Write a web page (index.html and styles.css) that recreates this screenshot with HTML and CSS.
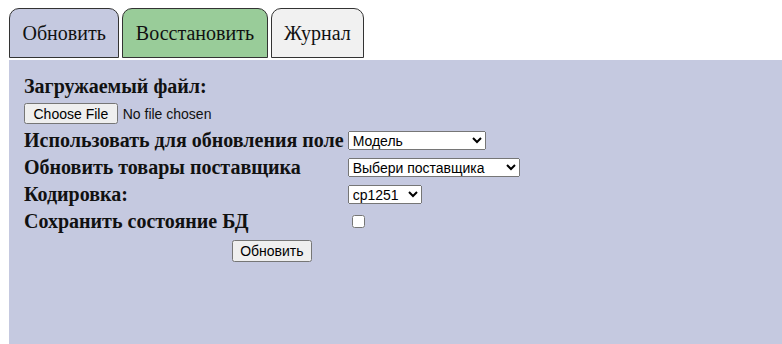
FILE: index.html
```html
<!DOCTYPE html>
<html lang="ru">
<head>
    <meta charset="UTF-8">
    <title>Обновление</title>
    <link rel="stylesheet" href="styles.css">
</head>
<body>
    <div class="tabs">
        <div class="tab tab-update">Обновить</div>
        <div class="tab tab-restore">Восстановить</div>
        <div class="tab tab-log">Журнал</div>
    </div>

    <div class="panel">
        <form class="upload-form">
            <div class="cell full label">Загружаемый файл:</div>
            <div class="cell full"><input type="file" name="file"></div>

            <div class="cell label">Использовать для обновления поле</div>
            <div class="cell">
                <select class="field-select" name="field">
                    <option>Модель</option>
                </select>
            </div>

            <div class="cell label">Обновить товары поставщика</div>
            <div class="cell">
                <select class="supplier-select" name="supplier">
                    <option>Выбери поставщика</option>
                </select>
            </div>

            <div class="cell label">Кодировка:</div>
            <div class="cell">
                <select class="encoding-select" name="encoding">
                    <option>cp1251</option>
                </select>
            </div>

            <div class="cell label">Сохранить состояние БД</div>
            <div class="cell"><input type="checkbox" name="backup"></div>

            <div class="cell full submit"><button type="button">Обновить</button></div>
        </form>
    </div>
</body>
</html>
```

FILE: styles.css
```css
body {
    margin: 8px 0 0 9px;
    font-family: 'Liberation Serif', 'Times New Roman', serif;
    font-size: 20px;
    color: #111;
}

.tabs {
    display: flex;
    gap: 3px;
    margin-bottom: 2px;
}

.tab {
    border: 1px solid #333;
    border-radius: 10px 10px 0 0;
    padding: 13px 12.5px 12px;
    line-height: 23px;
    cursor: pointer;
}

.tab-update {
    background: #c5c9e0;
}

.tab-restore {
    background: #99cc99;
}

.tab-log {
    background: #f1f1f1;
}

.panel {
    background: #c5c9e0;
    padding: 12px;
    min-height: 260px;
}

.upload-form {
    display: grid;
    grid-template-columns: auto auto;
    justify-content: start;
    align-items: center;
    gap: 2px;
    padding: 2px;
}

.cell {
    box-sizing: border-box;
    padding: 1px;
    height: 25px;
    line-height: 23px;
    display: flex;
    align-items: center;
}

.cell.full {
    grid-column: 1 / -1;
}

.label {
    font-weight: bold;
}

.submit {
    justify-content: center;
    height: 29px;
}

input,
select,
button {
    font-family: 'Liberation Sans', Arial, sans-serif;
    font-size: 14px;
}

input[type="file"]::file-selector-button {
    font-family: 'Liberation Sans', Arial, sans-serif;
    font-size: 14px;
    height: 21px;
    padding: 0 7.5px;
    margin-right: 5px;
}

button {
    height: 22px;
    padding: 0 6.5px;
}

select {
    height: 19px;
}

.field-select {
    width: 138px;
}

.supplier-select {
    width: 172px;
}

.encoding-select {
    width: 74px;
}
```
